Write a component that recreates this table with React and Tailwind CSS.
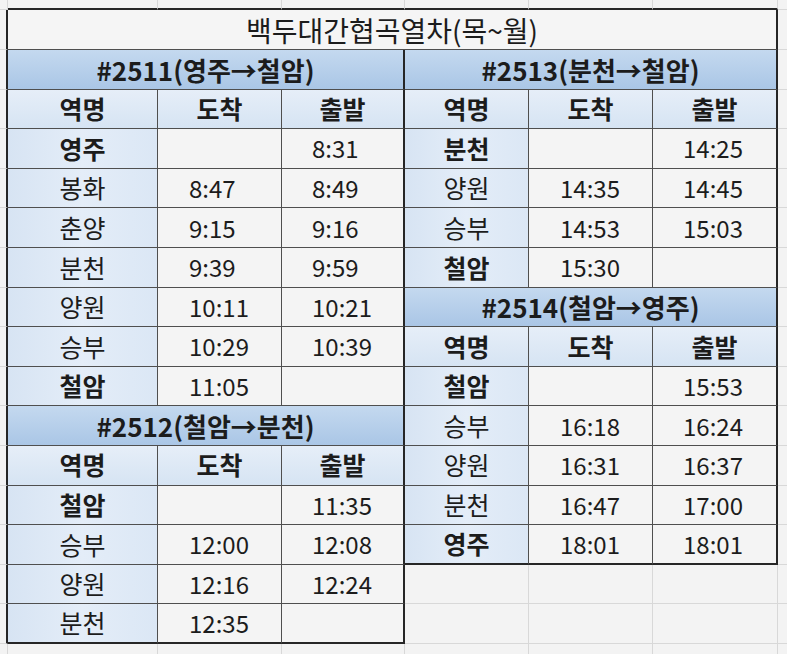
import React from 'react';

const leftRows = [
  ['H', '#2511(영주→철암)'],
  ['C'],
  ['S', '영주', true, '', '8:31'],
  ['S', '봉화', false, '8:47', '8:49'],
  ['S', '춘양', false, '9:15', '9:16'],
  ['S', '분천', false, '9:39', '9:59'],
  ['S', '양원', false, '10:11', '10:21'],
  ['S', '승부', false, '10:29', '10:39'],
  ['S', '철암', true, '11:05', ''],
  ['H', '#2512(철암→분천)'],
  ['C'],
  ['S', '철암', true, '', '11:35'],
  ['S', '승부', false, '12:00', '12:08'],
  ['S', '양원', false, '12:16', '12:24'],
  ['S', '분천', false, '12:35', ''],
];

const rightRows = [
  ['H', '#2513(분천→철암)'],
  ['C'],
  ['S', '분천', true, '', '14:25'],
  ['S', '양원', false, '14:35', '14:45'],
  ['S', '승부', false, '14:53', '15:03'],
  ['S', '철암', true, '15:30', ''],
  ['H', '#2514(철암→영주)'],
  ['C'],
  ['S', '철암', true, '', '15:53'],
  ['S', '승부', false, '16:18', '16:24'],
  ['S', '양원', false, '16:31', '16:37'],
  ['S', '분천', false, '16:47', '17:00'],
  ['S', '영주', true, '18:01', '18:01'],
  ['X'],
  ['X'],
];

// borders: each cell draws only its right and bottom edge
function edges(rightThick, bottomThick) {
  const r = rightThick ? 'border-r-2 border-r-[#262626]' : 'border-r border-r-[#4f4f4f]';
  const b = bottomThick ? 'border-b-2 border-b-[#262626]' : 'border-b border-b-[#4f4f4f]';
  return r + ' ' + b;
}

const sheet = 'bg-[#f3f3f3] border-r border-b border-[#d8d8d8]';

function Block({ row, bottomThick }) {
  const [type, a, bold, arr, dep] = row;
  if (type === 'X') {
    return (
      <>
        <div className={sheet} />
        <div className={sheet} />
        <div className={sheet} />
      </>
    );
  }
  if (type === 'H') {
    return (
      <div
        className={`col-span-3 flex items-center justify-center bg-linear-to-b from-[#c4d9ef] to-[#aac6e6] text-[26px] font-bold ${edges(true, false)}`}
      >
        {a}
      </div>
    );
  }
  if (type === 'C') {
    return (
      <>
        <div className={`flex items-center justify-center bg-linear-to-b from-[#e6eef8] to-[#d6e4f3] text-[25px] font-bold ${edges(false, false)}`}>역명</div>
        <div className={`flex items-center justify-center bg-linear-to-b from-[#e6eef8] to-[#d6e4f3] text-[25px] font-bold ${edges(false, false)}`}>도착</div>
        <div className={`flex items-center justify-center bg-linear-to-b from-[#e6eef8] to-[#d6e4f3] text-[25px] font-bold ${edges(true, false)}`}>출발</div>
      </>
    );
  }
  return (
    <>
      <div
        className={`flex items-center justify-center bg-linear-to-r from-[#d7e4f3] via-[#e4edf8] to-[#dbe7f5] text-[25px] ${bold ? 'font-bold' : 'font-normal'} ${edges(false, bottomThick)}`}
      >
        {a}
      </div>
      <div className={`flex items-center pl-[31px] bg-[#f4f4f4] text-[24px] ${edges(false, bottomThick)}`}>{arr}</div>
      <div className={`flex items-center pl-[30px] bg-[#f4f4f4] text-[24px] ${edges(true, bottomThick)}`}>{dep}</div>
    </>
  );
}

export default function App() {
  return (
    <div className="w-full h-screen overflow-hidden bg-[#f3f3f3] text-[#1c1c1c] font-['Noto_Sans_CJK_KR','Noto_Sans',sans-serif] grid grid-cols-[8px_150px_124px_123px_124px_124px_125px_1fr] grid-rows-[10px_40px_repeat(15,39.6px)_1fr]">
      {/* top strip of the sheet */}
      <div className={sheet} />
      {[0, 1, 2, 3, 4, 5].map((i) => (
        <div key={'t' + i} className="bg-[#f3f3f3] border-r border-r-[#d8d8d8] border-b-2 border-b-[#262626]" />
      ))}
      <div className="bg-[#f3f3f3] border-b border-[#d8d8d8]" />

      {/* title */}
      <div className="bg-[#f3f3f3] border-b border-b-[#d8d8d8] border-r-2 border-r-[#262626]" />
      <div className={`col-span-6 flex items-center justify-center bg-[#f5f5f5] text-[28px] ${edges(true, false)}`}>
        백두대간협곡열차(목~월)
      </div>
      <div className="bg-[#f3f3f3] border-b border-[#d8d8d8]" />

      {leftRows.map((row, i) => (
        <React.Fragment key={'r' + i}>
          <div className="bg-[#f3f3f3] border-b border-b-[#d8d8d8] border-r-2 border-r-[#262626]" />
          <Block row={row} bottomThick={i === 14} />
          <Block row={rightRows[i]} bottomThick={i === 12} />
          <div className="bg-[#f3f3f3] border-b border-[#d8d8d8]" />
        </React.Fragment>
      ))}

      {/* bottom strip */}
      <div className="bg-[#f3f3f3] border-r border-[#d8d8d8]" />
      {[0, 1, 2, 3, 4, 5].map((i) => (
        <div key={'b' + i} className="bg-[#f3f3f3] border-r border-[#d8d8d8]" />
      ))}
      <div className="bg-[#f3f3f3]" />
    </div>
  );
}
